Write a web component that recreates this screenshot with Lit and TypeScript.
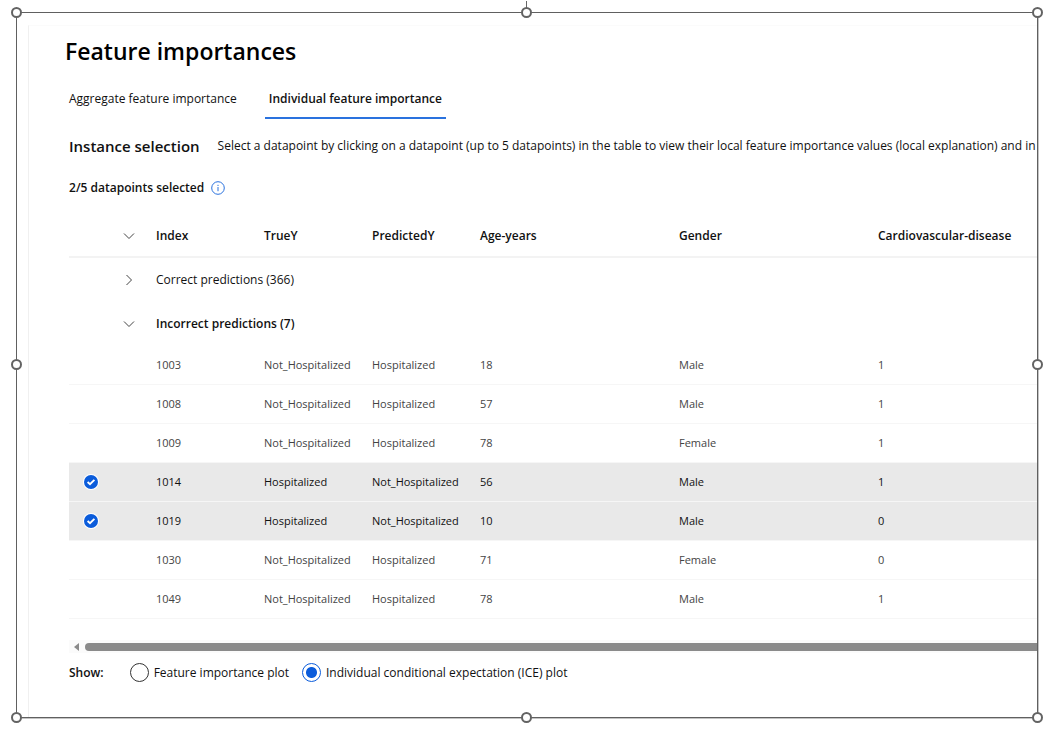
import { LitElement, html, css, svg } from "lit";
import { customElement, state } from "lit/decorators.js";
import { classMap } from "lit/directives/class-map.js";

interface Row {
  index: number;
  trueY: string;
  predictedY: string;
  age: number;
  gender: string;
  cardio: number;
}

const YES = "Hospitalized";
const NO = "Not_Hospitalized";

const ROWS: Row[] = [
  { index: 1003, trueY: NO, predictedY: YES, age: 18, gender: "Male", cardio: 1 },
  { index: 1008, trueY: NO, predictedY: YES, age: 57, gender: "Male", cardio: 1 },
  { index: 1009, trueY: NO, predictedY: YES, age: 78, gender: "Female", cardio: 1 },
  { index: 1014, trueY: YES, predictedY: NO, age: 56, gender: "Male", cardio: 1 },
  { index: 1019, trueY: YES, predictedY: NO, age: 10, gender: "Male", cardio: 0 },
  { index: 1030, trueY: NO, predictedY: YES, age: 71, gender: "Female", cardio: 0 },
  { index: 1049, trueY: NO, predictedY: YES, age: 78, gender: "Male", cardio: 1 },
];

const HANDLES = ["nw", "n", "ne", "w", "e", "sw", "s", "se"];

const chevronDown = svg`<path d="M1 3.5 6 8.5 11 3.5" />`;
const chevronRight = svg`<path d="M3.5 1 8.5 6 3.5 11" />`;

@customElement("app-root")
export class AppRoot extends LitElement {
  static styles = css`
    :host {
      display: block;
      box-sizing: border-box;
      min-height: 100vh;
      padding: 12px 13px 12px 16px;
      background: #fff;
      color: #111;
      font: 12px/16px "Open Sans", "Noto Sans", sans-serif;
    }
    .frame {
      position: relative;
      border: 1px solid #606060;
      box-shadow: 1px 1px 0 #c4c4c4;
      padding: 12px 0 0 11px;
    }
    .handle {
      position: absolute;
      box-sizing: border-box;
      width: 11px;
      height: 11px;
      margin: -6px 0 0 -6px;
      border: 2px solid #636363;
      border-radius: 50%;
      background: #fff;
    }
    .nw, .n, .ne { top: 0; }
    .w, .e { top: 50%; }
    .sw, .s, .se { top: 100%; margin-top: -5px; }
    .nw, .w, .sw { left: 0; }
    .n, .s { left: 50%; }
    .ne, .e, .se { left: 100%; margin-left: -5px; }
    .stem {
      position: absolute;
      left: 50%;
      bottom: 100%;
      width: 1px;
      height: 12px;
      margin-left: -1px;
      background: #666;
    }
    .panel {
      overflow: hidden;
      border-left: 1px solid #f0f0f0;
      border-top: 1px solid #fbfbfb;
      padding: 7px 0 35px 40px;
    }
    h1 {
      margin: 0 0 0 -4px;
      font-size: 23px;
      line-height: 36px;
      font-weight: 600;
      color: #000;
    }
    .tabs {
      display: flex;
      gap: 24px;
      margin: 12px 0 0 -4px;
    }
    .tab {
      border: 0;
      border-bottom: 2px solid transparent;
      padding: 10px 4px;
      background: none;
      font: inherit;
      color: inherit;
      white-space: nowrap;
    }
    .tab.active {
      font-weight: 600;
      border-color: #2a72de;
    }
    .instance {
      display: flex;
      align-items: center;
      gap: 18px;
      margin-top: 15px;
      white-space: nowrap;
    }
    h2 {
      margin: 0;
      font-size: 15px;
      line-height: 24px;
      font-weight: 600;
    }
    p { margin: 0; }
    .count {
      display: flex;
      align-items: center;
      gap: 7px;
      margin-top: 22px;
      font-weight: 600;
    }
    .info {
      display: flex;
      border: 0;
      padding: 0;
      background: none;
    }
    .viewport {
      overflow: hidden;
      margin-top: 20px;
    }
    table {
      width: 1200px;
      table-layout: fixed;
      border-collapse: separate;
      border-spacing: 0;
    }
    .c-check { width: 44px; }
    .c-toggle { width: 35px; }
    .c-short { width: 108px; }
    .c-long { width: 199px; }
    th, td {
      box-sizing: border-box;
      padding: 0 8px;
      text-align: left;
      white-space: nowrap;
    }
    thead th {
      height: 42px;
      border-bottom: 2px solid #f3f3f3;
      font-weight: 600;
    }
    .group th {
      height: 44px;
      font-weight: 400;
    }
    .group.open th { font-weight: 600; }
    .row td {
      height: 39px;
      border-bottom: 1px solid #f6f6f6;
      font-size: 11px;
      color: #444;
    }
    .row.selected td {
      background: #e9e9e9;
      color: #111;
    }
    .toggle {
      display: block;
      border: 0;
      padding: 2px;
      background: none;
    }
    .toggle svg {
      display: block;
      fill: none;
      stroke: #444;
      stroke-width: 1;
    }
    .mark {
      display: grid;
      place-items: center;
      width: 28px;
    }
    .mark input, .option input {
      appearance: none;
      margin: 0;
    }
    .mark input {
      grid-area: 1 / 1;
      width: 14px;
      height: 14px;
    }
    .mark svg {
      grid-area: 1 / 1;
      pointer-events: none;
    }
    .scrollbar {
      display: flex;
      align-items: center;
      gap: 6px;
      height: 13px;
      margin-top: 21px;
      padding-left: 5px;
      background: #fbfbfb;
    }
    .thumb {
      flex: 1;
      height: 8px;
      border-radius: 4px 0 0 4px;
      background: #8a8a8a;
    }
    fieldset {
      display: flex;
      align-items: center;
      gap: 13px;
      margin: 10px 0 0;
      border: 0;
      padding: 0;
      font-size: 12px;
    }
    .show {
      margin-right: 13px;
      font-weight: 600;
    }
    .option {
      display: flex;
      align-items: center;
      gap: 5px;
    }
    .option input {
      box-sizing: border-box;
      width: 19px;
      height: 19px;
      border: 1px solid #333;
      border-radius: 50%;
    }
    .option input:checked {
      border-color: #0b5cdb;
      background: radial-gradient(circle, #0b5cdb 5px, #fff 6px);
    }
  `;

  @state() private selected = new Set([1014, 1019]);
  @state() private open = true;
  @state() private plot = "ice";
  @state() private tab = 1;

  private pick(index: number) {
    const next = new Set(this.selected);
    if (!next.delete(index) && next.size < 5) next.add(index);
    this.selected = next;
  }

  private toggle(label: string, open: boolean, action?: () => void) {
    return html`<button class="toggle" aria-label=${label} aria-expanded=${open} @click=${action}>
      <svg width="12" height="12" viewBox="0 0 12 12">${open ? chevronDown : chevronRight}</svg>
    </button>`;
  }

  private row(r: Row) {
    const on = this.selected.has(r.index);
    return html`<tr class=${classMap({ row: true, selected: on })}>
      <td>
        <label class="mark">
          <input type="checkbox" aria-label="Select ${r.index}" .checked=${on} @change=${() => this.pick(r.index)} />
          ${on
            ? html`<svg width="16" height="16" viewBox="0 0 16 16">
                <circle cx="8" cy="8" r="8" fill="#fff" />
                <circle cx="8" cy="8" r="7" fill="#0b5cdb" />
                <path d="M4.6 8 7 10.2 11.4 5.9" fill="none" stroke="#fff" stroke-width="1.9" />
              </svg>`
            : ""}
        </label>
      </td>
      <td></td>
      <td>${r.index}</td>
      <td>${r.trueY}</td>
      <td>${r.predictedY}</td>
      <td>${r.age}</td>
      <td>${r.gender}</td>
      <td>${r.cardio}</td>
    </tr>`;
  }

  private option(value: string, text: string) {
    return html`<label class="option">
      <input type="radio" name="plot" .checked=${this.plot === value} @change=${() => (this.plot = value)} />
      ${text}
    </label>`;
  }

  render() {
    const tabs = ["Aggregate feature importance", "Individual feature importance"];
    return html`
      <div class="frame">
        <main class="panel">
          <h1>Feature importances</h1>
          <div class="tabs" role="tablist">
            ${tabs.map(
              (t, i) => html`<button
                role="tab"
                aria-selected=${this.tab === i}
                class=${classMap({ tab: true, active: this.tab === i })}
                @click=${() => (this.tab = i)}
              >${t}</button>`
            )}
          </div>
          <div class="instance">
            <h2>Instance selection</h2>
            <p>Select a datapoint by clicking on a datapoint (up to 5 datapoints) in the table to view their local feature importance values (local explanation) and in</p>
          </div>
          <div class="count">
            <span>${this.selected.size}/5 datapoints selected</span>
            <button class="info" aria-label="More information">
              <svg width="14" height="14" viewBox="0 0 14 14">
                <circle cx="7" cy="7" r="6.3" fill="none" stroke="#2a72de" />
                <path d="M7 6v4.2M7 3.8v1.2" stroke="#2a72de" />
              </svg>
            </button>
          </div>
          <div class="viewport">
            <table>
              <colgroup>
                <col class="c-check" />
                <col class="c-toggle" />
                <col class="c-short" />
                <col class="c-short" />
                <col class="c-short" />
                <col class="c-long" />
                <col class="c-long" />
                <col />
              </colgroup>
              <thead>
                <tr>
                  <th></th>
                  <th>${this.toggle("All groups", true)}</th>
                  <th>Index</th>
                  <th>TrueY</th>
                  <th>PredictedY</th>
                  <th>Age-years</th>
                  <th>Gender</th>
                  <th>Cardiovascular-disease</th>
                </tr>
              </thead>
              <tbody>
                <tr class="group">
                  <th></th>
                  <th>${this.toggle("Correct predictions", false)}</th>
                  <th colspan="6">Correct predictions (366)</th>
                </tr>
                <tr class="group open">
                  <th></th>
                  <th>${this.toggle("Incorrect predictions", this.open, () => (this.open = !this.open))}</th>
                  <th colspan="6">Incorrect predictions (7)</th>
                </tr>
                ${this.open ? ROWS.map((r) => this.row(r)) : ""}
              </tbody>
            </table>
          </div>
          <div class="scrollbar">
            <svg width="5" height="8" viewBox="0 0 5 8"><path d="M5 0v8L0 4z" fill="#8a8a8a" /></svg>
            <div class="thumb"></div>
          </div>
          <fieldset aria-label="Show">
            <span class="show">Show:</span>
            ${this.option("importance", "Feature importance plot")}
            ${this.option("ice", "Individual conditional expectation (ICE) plot")}
          </fieldset>
        </main>
        <div class="stem"></div>
        ${HANDLES.map((h) => html`<span class="handle ${h}"></span>`)}
      </div>
    `;
  }
}
